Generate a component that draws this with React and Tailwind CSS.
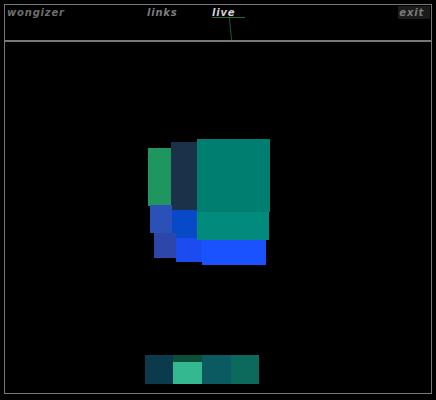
import React from 'react'

const blocks = [
  { x: 143, y: 106, w: 23, h: 58, c: '#1f9660' },
  { x: 166, y: 100, w: 26, h: 68, c: '#1b3049' },
  { x: 145, y: 163, w: 22, h: 28, c: '#2b51b9' },
  { x: 167, y: 168, w: 26, h: 28, c: '#0849c9' },
  { x: 149, y: 191, w: 22, h: 25, c: '#2c47a9' },
  { x: 171, y: 196, w: 26, h: 24, c: '#1b4cf0' },
  { x: 197, y: 198, w: 64, h: 25, c: '#1a52ff' },
  { x: 192, y: 170, w: 72, h: 28, c: '#008b7c' },
  { x: 192, y: 97, w: 73, h: 73, c: '#007f70' },
]

const NavItem = ({ children, className }) => (
  <span className={`block text-[10px] font-bold italic tracking-[0.8px] leading-[12px] ${className}`}>
    {children}
  </span>
)

export default function App() {
  return (
    <div className="w-[436px] h-[400px] bg-black pt-[4px] px-[4px]" style={{ fontFamily: '"DejaVu Sans", Verdana, sans-serif' }}>
      <div className="relative h-[37px] border border-[#777] flex items-start pt-[1px]">
        <NavItem className="ml-[2px] w-[140px] pt-[1px] text-[#6e6e6e]">wongizer</NavItem>
        <NavItem className="w-[65px] pt-[1px] text-[#7c7c7c]">links</NavItem>
        <NavItem className="pt-[1px] text-[#d2d2d2]">live</NavItem>
        <div className="ml-auto mr-[1px] bg-[#1b1b1b] pl-[1px] pr-[6px] pt-[1px]">
          <NavItem className="text-[#7a7a7a]">exit</NavItem>
        </div>
        <svg className="absolute left-0 top-0" width="426" height="35">
          <line x1="207" y1="12.5" x2="240" y2="12.5" stroke="#1c6a34" strokeWidth="1" />
          <line x1="224.5" y1="13" x2="226.5" y2="35" stroke="#1c5a34" strokeWidth="1" />
        </svg>
      </div>
      <div className="relative h-[353px] border border-[#777]">
        {blocks.map((b, i) => (
          <div
            key={i}
            className="absolute"
            style={{ left: b.x, top: b.y, width: b.w, height: b.h, background: b.c }}
          />
        ))}
        <div className="absolute left-[140px] top-[313px] flex h-[29px]">
          <div className="w-[28px] bg-[#0a3a4c]" />
          <div className="w-[29px] flex flex-col">
            <div className="h-[7px] bg-[#0b4f3a]" />
            <div className="flex-1 bg-[#33b88f]" />
          </div>
          <div className="w-[29px] bg-[#0b5a62]" />
          <div className="w-[28px] bg-[#0b6a5b]" />
        </div>
      </div>
    </div>
  )
}
